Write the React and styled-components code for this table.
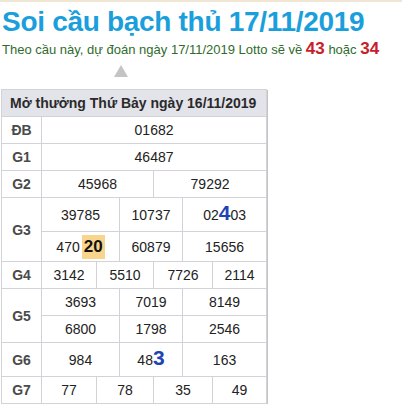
import React from 'react';
import styled, { createGlobalStyle } from 'styled-components';

const GlobalStyle = createGlobalStyle`
  body {
    margin: 0;
    background: #fff;
    font-family: "Liberation Sans", Arial, sans-serif;
  }
`;

const Page = styled.div`
  border-top: 2px solid #efe7d4;
  padding: 0 0 0 1px;
`;

const Title = styled.h1`
  margin: 0;
  padding: 4px 0 0 1px;
  font-size: 28px;
  line-height: 32px;
  letter-spacing: -0.3px;
  font-weight: bold;
  color: #1a9fdc;
`;

const Lead = styled.p`
  margin: 0;
  padding: 2px 0 0 1px;
  height: 20px;
  font-size: 13px;
  line-height: 20px;
  color: #2f6b2c;
`;

const Hit = styled.b`
  color: #c8202a;
  font-size: 17px;
  line-height: 14px;
`;

const Arrow = styled.div`
  width: 0;
  height: 0;
  margin: 5px 0 0 113px;
  border-left: 7px solid transparent;
  border-right: 7px solid transparent;
  border-bottom: 12px solid #c4c4c4;
`;

const Table = styled.table`
  margin-top: 12px;
  width: 266px;
  table-layout: fixed;
  border-collapse: collapse;
  font-size: 14px;
  color: #222;
  box-shadow: 1px 1px 0 #c4c4c4;
`;

const Cell = styled.td`
  border: 1px solid #d2d2d8;
  height: ${p => p.$h || 26}px;
  padding: 0;
  text-align: center;
  vertical-align: middle;
`;

const Label = styled(Cell)`
  font-weight: bold;
  color: #4a4a4a;
`;

const Head = styled.th`
  border: 1px solid #d2d2d8;
  background: #e3e3ea;
  height: 26px;
  padding: 0 0 0 8px;
  text-align: left;
  font-size: 14px;
  font-weight: bold;
  color: #2a2a2a;
  white-space: nowrap;
`;

const Big = styled.b`
  color: #1c44b4;
  font-size: 21px;
  line-height: 14px;
`;

const Mark = styled.b`
  display: inline-block;
  background: #f8d48c;
  color: #111;
  font-size: 17px;
  line-height: 24px;
  padding: 0 2px;
  margin-left: 2px;
`;

const cols = [40, 55, 23, 34, 29, 30, 54];

const rows = [
  { label: 'ĐB', cells: [[6, '01682']] },
  { label: 'G1', cells: [[6, '46487']] },
  { label: 'G2', cells: [[3, '45968'], [3, '79292']] },
  {
    label: 'G3',
    h: 33,
    span: 2,
    cells: [[2, '39785'], [2, '10737'], [2, <>02<Big>4</Big>03</>]],
  },
  { h: 29, cells: [[2, <>470<Mark>20</Mark></>], [2, '60879'], [2, '15656']] },
  { label: 'G4', cells: [[1, '3142'], [2, '5510'], [2, '7726'], [1, '2114']] },
  { label: 'G5', span: 2, cells: [[2, '3693'], [2, '7019'], [2, '8149']] },
  { cells: [[2, '6800'], [2, '1798'], [2, '2546']] },
  { label: 'G6', h: 33, cells: [[2, '984'], [2, <>48<Big>3</Big></>], [2, '163']] },
  { label: 'G7', cells: [[1, '77'], [2, '78'], [2, '35'], [1, '49']] },
];

export default function App() {
  return (
    <Page>
      <GlobalStyle />
      <Title>Soi cầu bạch thủ 17/11/2019</Title>
      <Lead>
        Theo cầu này, dự đoán ngày 17/11/2019 Lotto sẽ về <Hit>43</Hit> hoặc <Hit>34</Hit>
      </Lead>
      <Arrow />
      <Table>
        <colgroup>
          {cols.map((w, i) => (
            <col key={i} style={{ width: w }} />
          ))}
        </colgroup>
        <thead>
          <tr>
            <Head colSpan={7}>Mở thưởng Thứ Bảy ngày 16/11/2019</Head>
          </tr>
        </thead>
        <tbody>
          {rows.map((r, i) => (
            <tr key={i}>
              {r.label && (
                <Label rowSpan={r.span || 1} $h={r.h}>
                  {r.label}
                </Label>
              )}
              {r.cells.map(([span, v], j) => (
                <Cell key={j} colSpan={span} $h={r.h}>
                  {v}
                </Cell>
              ))}
            </tr>
          ))}
        </tbody>
      </Table>
    </Page>
  );
}
